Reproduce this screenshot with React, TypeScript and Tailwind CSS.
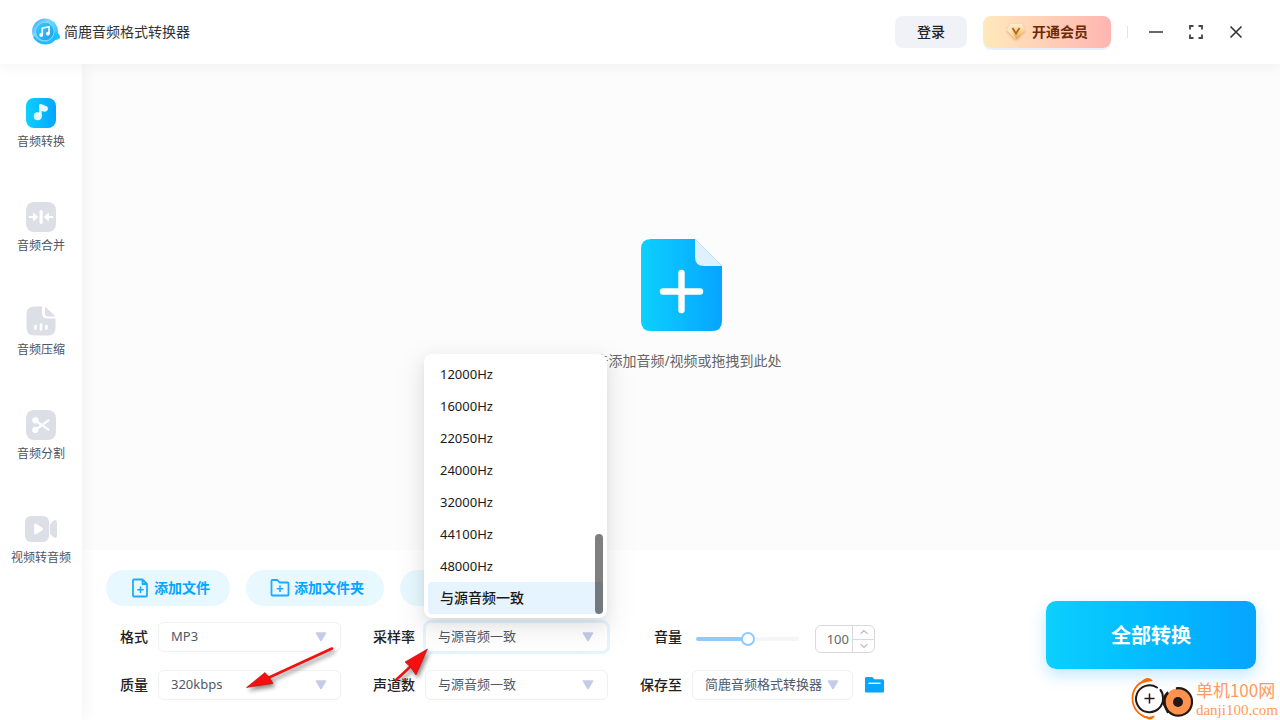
import React, { useState } from 'react';
import { ChevronDown, ChevronUp } from 'lucide-react';

interface NavItem {
  id: string;
  label: string;
  icon: React.ReactNode;
}

const navItems: NavItem[] = [
  {
    id: 'convert',
    label: '音频转换',
    icon: (
      <svg viewBox="0 0 32 32" className="w-8 h-8">
        <defs>
          <linearGradient id="nav-blue" x1="0" y1="0" x2="1" y2="0">
            <stop offset="0" stopColor="#0cd0ff" />
            <stop offset="1" stopColor="#06a5ff" />
          </linearGradient>
        </defs>
        <rect x="1" y="1" width="30" height="30" rx="8" fill="url(#nav-blue)" />
        <circle cx="12.7" cy="19.3" r="4" fill="#e8f8ff" />
        <path d="M14 19.5V8.6c0-1.2 1.1-2 2.2-1.5l5.200 2.100c1 .4 1.600 1.200 1.600 2.300 0 2.200-1.700 3.500-3.800 3.200l-2.500-.7v5.500z" fill="#e8f8ff" />
      </svg>
    ),
  },
  {
    id: 'merge',
    label: '音频合并',
    icon: (
      <svg viewBox="0 0 32 32" className="w-8 h-8">
        <rect x="1" y="1" width="30" height="30" rx="8" fill="#dcdfe6" />
        <rect x="14.500" y="9" width="3.200" height="14" rx="1.500" fill="#fff" />
        <path d="M4.500 16h6M27.500 16h-6" stroke="#fff" strokeWidth="2" strokeLinecap="round" />
        <path d="M8.500 12.200l4.300 3.800-4.300 3.800zM23.500 12.200l-4.300 3.800 4.300 3.800z" fill="#fff" stroke="#fff" strokeWidth=".8" strokeLinejoin="round" />
      </svg>
    ),
  },
  {
    id: 'compress',
    label: '音频压缩',
    icon: (
      <svg viewBox="0 0 32 32" className="w-8 h-8">
        <path d="M9.500 1.500h7.500v6.500q0 5.500 5.500 5.500h8V23q0 7.500-7.500 7.500H9.500q-8 0-8-8V9.500q0-8 8-8z" fill="#dcdfe6" />
        <path d="M20 2.200q.9 0 1.500.7l7.600 7q1 .9.800 1.600h-6.400q-3.500 0-3.500-3.500z" fill="#dcdfe6" />
        <path d="M10.500 21v2.500M16 19.500v5M21.500 21v2.500" stroke="#fff" strokeWidth="2.600" strokeLinecap="round" />
      </svg>
    ),
  },
  {
    id: 'split',
    label: '音频分割',
    icon: (
      <svg viewBox="0 0 32 32" className="w-8 h-8">
        <rect x="1" y="1" width="30" height="30" rx="8" fill="#dcdfe6" />
        <circle cx="10.300" cy="11.300" r="3.100" fill="#fff" />
        <circle cx="10.300" cy="20.900" r="3.100" fill="#fff" />
        <path d="M11 12l12.500 8.600M11 20.500L23.500 11.300" stroke="#fff" strokeWidth="2.200" strokeLinecap="round" />
      </svg>
    ),
  },
  {
    id: 'video',
    label: '视频转音频',
    icon: (
      <svg viewBox="0 0 32 32" className="w-8 h-8">
        <rect x="0" y="3" width="24" height="26" rx="6" fill="#dcdfe6" />
        <path d="M24.800 11.500L28 8q4-2.500 4 2v12q0 4.500-4 2l-3.200-3.500z" fill="#dcdfe6" />
        <path d="M9.500 12.200v7.600q0 1.800 1.600 1l6-3.800q1.300-1 0-2l-6-3.800q-1.600-.8-1.600 1z" fill="#fff" stroke="#fff" strokeWidth=".8" />
      </svg>
    ),
  },
];

const sampleRates = [
  '12000Hz',
  '16000Hz',
  '22050Hz',
  '24000Hz',
  '32000Hz',
  '44100Hz',
  '48000Hz',
  '与源音频一致',
];

const Logo = () => (
  <svg viewBox="0 0 28 28" className="w-7 h-7">
    <defs>
      <linearGradient id="logo-ring" x1="0" y1="0" x2="1" y2="1">
        <stop offset="0" stopColor="#3a9bff" />
        <stop offset=".35" stopColor="#7fd4ff" />
        <stop offset="1" stopColor="#05c8f8" />
      </linearGradient>
      <linearGradient id="logo-core" x1="0" y1="0" x2="1" y2="1">
        <stop offset="0" stopColor="#2fd3fb" />
        <stop offset="1" stopColor="#2497fa" />
      </linearGradient>
    </defs>
    <circle cx="13" cy="13.500" r="13" fill="url(#logo-ring)" />
    <path d="M19 22l4-8 1.500.5q3.500 1 3.500 5-1 2.500-6 2.500z" fill="#12c9f7" />
    <path d="M2 19q5 7 13 6t9-8" fill="none" stroke="#28b4ff" strokeWidth="2" />
    <circle cx="12.800" cy="13.500" r="9.300" fill="url(#logo-core)" stroke="#8fe3ff" strokeWidth=".8" />
    <path d="M10.300 17V10.200l6.700-1.400v6.800" fill="none" stroke="#fff" strokeWidth="1.600" />
    <circle cx="9.200" cy="17" r="1.900" fill="#fff" />
    <circle cx="15.900" cy="15.700" r="1.900" fill="#fff" />
  </svg>
);

const VipIcon = () => (
  <svg viewBox="0 0 20 20" className="w-5 h-5 drop-shadow-[0_1px_1px_rgba(190,110,30,0.45)]">
    <defs>
      <linearGradient id="vip-gold" x1="0" y1="0" x2="0" y2="1">
        <stop offset="0" stopColor="#fff0d2" />
        <stop offset=".5" stopColor="#fbcf8c" />
        <stop offset="1" stopColor="#f3a040" />
      </linearGradient>
    </defs>
    <path d="M5.500 2h9q1.200 0 2 1L18.700 6.500q.8 1.500-.3 2.700l-6.900 7.200q-1.500 1.400-3 0L1.600 9.200Q.5 8 1.300 6.500L3.500 3q.8-1 2-1z" fill="url(#vip-gold)" />
    <path d="M1.200 7.500L4 5l6 12q-.8 0-1.500-.6L1.600 9.200Q.9 8.500 1.200 7.500z" fill="#fff3dc" opacity=".55" />
    <path d="M6.500 6l3.500 5.500L13.500 6" fill="none" stroke="#b06a28" strokeWidth="1.900" />
  </svg>
);

const Triangle = () => (
  <svg viewBox="0 0 12 10" className="w-3 h-2.5 absolute right-[14px] top-[10px] pointer-events-none">
    <path d="M1.500 1h9L6 8.500z" fill="#c8cbe8" stroke="#c8cbe8" strokeWidth="1.600" strokeLinejoin="round" />
  </svg>
);

interface FieldProps {
  id: string;
  label: string;
  children: React.ReactNode;
}

const Field: React.FC<FieldProps> = ({ id, label, children }) => (
  <div className="flex items-center gap-[10px] h-[30px]">
    <label htmlFor={id} className="w-[42px] text-right text-sm font-medium text-[#222] whitespace-nowrap">
      {label}
    </label>
    {children}
  </div>
);

interface SelectProps {
  id: string;
  value: string;
  open?: boolean;
  narrow?: boolean;
}

const Select: React.FC<SelectProps> = ({ id, value, open, narrow }) => (
  <div className={`relative ${narrow ? 'w-[161px]' : 'w-[183px]'}`}>
    <select
      id={id}
      defaultValue={value}
      className={`appearance-none block w-full h-[30px] pl-3 pr-7 rounded-md border bg-transparent text-[13px] text-[#4e5969] outline-none ${
        open ? 'border-[#e6f4ff] ring-2 ring-[#e6f4ff]' : 'border-[#f0f0f5]'
      }`}
    >
      <option>{value}</option>
    </select>
    <Triangle />
    {open && (
      <div className="absolute z-30 bottom-full mb-1 -left-px w-[183px] p-1 bg-white rounded-lg shadow-[0_6px_16px_rgba(0,0,0,0.08),0_3px_6px_-4px_rgba(0,0,0,0.12),0_9px_28px_8px_rgba(0,0,0,0.05)]">
        <ul role="listbox">
          {sampleRates.map(rate => (
            <li
              key={rate}
              role="option"
              aria-selected={rate === value}
              className={`h-8 px-3 leading-8 rounded text-[#1a1a1a] ${
                rate === value ? 'bg-[#e6f4ff] text-sm font-medium' : 'text-[13px]'
              }`}
            >
              {rate}
            </li>
          ))}
        </ul>
        <div className="absolute right-1 bottom-1 w-2 h-20 rounded-full bg-black/50" />
      </div>
    )}
  </div>
);

const Watermark = () => (
  <div className="absolute right-[2px] bottom-0 z-40 flex items-end text-[#ff9a5c] pointer-events-none">
    <svg viewBox="0 0 66 44" className="w-[66px] h-11">
      <path d="M19 4.500C9 4.500 2.500 13 2.500 22.500S9 40 18 41.500" fill="none" stroke="#ff6a00" strokeWidth="1.800" />
      <path d="M10 7q4-5 8-5 3 0 5 3-5 0-8 1.500zM10 38q5 3 9 3l6-1.500q-2 4.500-6 4-2-1.500-4-1.500-3-1-5-4z" fill="#ff6a00" />
      <circle cx="19.500" cy="22.500" r="13" fill="#fff" />
      <path d="M27 11.500A13.500 13.500 0 1 0 33 22q0-5-2.500-8" fill="none" stroke="#231815" strokeWidth="2" strokeLinecap="round" />
      <path d="M19.500 17.500v10M14.500 22.500h10" stroke="#231815" strokeWidth="1.500" />
      <circle cx="48" cy="26" r="13.500" fill="#ff924d" />
      <path d="M46 12.400a13.700 13.700 0 1 1-8 4.500" fill="none" stroke="#231815" strokeWidth="2.200" />
      <path d="M38 16q-6 5-4 13l4 8" fill="none" stroke="#231815" strokeWidth="1.800" />
      <circle cx="48" cy="26" r="5" fill="#231815" />
    </svg>
    <div className="whitespace-nowrap">
      <div className="text-[17px] leading-5 font-['Noto_Sans_CJK_SC',sans-serif]">单机100网</div>
      <div className="text-[15px] leading-5 font-['Liberation_Serif',serif]">danji100.com</div>
    </div>
  </div>
);

export default function App() {
  const [active, setActive] = useState('convert');
  const [volume, setVolume] = useState(100);

  return (
    <div className="relative min-h-screen flex flex-col bg-white overflow-hidden font-['Noto_Sans','Noto_Sans_CJK_SC',sans-serif]">
      <header className="relative z-20 h-16 pl-8 pr-6 flex items-center bg-white shadow-[0_2px_16px_rgba(0,0,0,0.05)]">
        <Logo />
        <h1 className="ml-1 text-sm text-[#333]">简鹿音频格式转换器</h1>
        <button className="ml-auto w-[72px] h-8 rounded-lg bg-[#f1f2f8] text-sm font-medium text-[#222]">登录</button>
        <button className="ml-4 w-32 h-8 rounded-lg flex items-center justify-center gap-1.5 bg-linear-to-r from-[#ffe9bb] to-[#ffb5b2] shadow-[0_2px_0_#e6f2ff] text-sm font-bold text-[#6b2a05]">
          <VipIcon />
          开通会员
        </button>
        <div className="ml-4 mr-2 w-px h-3 bg-[#e3e3e6]" />
        <button aria-label="最小化" className="w-10 h-10 flex items-center justify-center">
          <svg viewBox="0 0 16 16" className="w-4 h-4"><path d="M1 8h14" stroke="#444" strokeWidth="1.600" /></svg>
        </button>
        <button aria-label="最大化" className="w-10 h-10 flex items-center justify-center">
          <svg viewBox="0 0 16 16" className="w-4 h-4">
            <path d="M2 5.500V2h3.500M10.500 2H14v3.500M14 10.500V14h-3.500M5.500 14H2v-3.500" fill="none" stroke="#444" strokeWidth="1.800" />
          </svg>
        </button>
        <button aria-label="关闭" className="w-10 h-10 flex items-center justify-center">
          <svg viewBox="0 0 16 16" className="w-4 h-4"><path d="M2.500 2.500l11 11M13.500 2.500l-11 11" stroke="#333" strokeWidth="1.600" /></svg>
        </button>
      </header>

      <div className="flex-1 flex">
        <aside className="relative z-10 w-[82px] shrink-0 pt-[33px] bg-white shadow-[2px_0_16px_rgba(0,0,0,0.05)]">
          <nav className="flex flex-col gap-[51px]">
            {navItems.map(item => (
              <button
                key={item.id}
                onClick={() => setActive(item.id)}
                aria-current={active === item.id ? 'page' : undefined}
                className="flex flex-col items-center gap-[5px] text-xs leading-4 text-[#4e5566]"
              >
                {item.icon}
                {item.label}
              </button>
            ))}
          </nav>
        </aside>

        <main className="flex-1 min-w-0 flex flex-col">
          <section className="flex-1 flex flex-col items-center justify-center gap-5 pb-1 bg-[#fcfcfc]">
            <svg viewBox="0 0 81 92" className="w-[81px] h-[92px]">
              <defs>
                <linearGradient id="file-blue" x1="0" y1="0" x2="1" y2="0">
                  <stop offset="0" stopColor="#0cd0ff" />
                  <stop offset="1" stopColor="#06a5ff" />
                </linearGradient>
              </defs>
              <path d="M10 0h44l27 27v55q0 10-10 10H10Q0 92 0 82V10Q0 0 10 0z" fill="url(#file-blue)" />
              <path d="M54 0l27 27H63q-9 0-9-9z" fill="#dff1fc" />
              <path d="M40.500 34v37M22 52.500h37" stroke="#fff" strokeWidth="6.400" strokeLinecap="round" />
            </svg>
            <p className="text-sm leading-5 text-[#666]">点击添加音频/视频或拖拽到此处</p>
          </section>

          <section className="relative px-6 py-5 flex items-center justify-between gap-6 bg-white">
            <div className="flex flex-col gap-4">
              <div className="flex gap-4 text-sm font-bold text-[#06a5ff]">
                <button className="h-9 pl-6 pr-5 rounded-full bg-[#e8f8ff] flex items-center gap-1">
                  <svg viewBox="0 0 20 20" className="w-5 h-5">
                    <path d="M4 1.500h8.500l4.500 4.500v11.500q0 1-1 1H4q-1 0-1-1v-15q0-1 1-1zM12.500 1.500v4.500h4.500" fill="none" stroke="#1eaaff" strokeWidth="1.800" strokeLinejoin="round" />
                    <path d="M10.500 8.500v6.500M7.200 11.800h6.500" stroke="#1eaaff" strokeWidth="1.600" />
                  </svg>
                  添加文件
                </button>
                <button className="h-9 pl-6 pr-5 rounded-full bg-[#e8f8ff] flex items-center gap-1">
                  <svg viewBox="0 0 20 20" className="w-5 h-5">
                    <path d="M2.500 2h5l2 2.500h8q1 0 1 1V16.500q0 1-1 1h-15q-1 0-1-1V3q0-1 1-1z" fill="none" stroke="#1eaaff" strokeWidth="1.800" strokeLinejoin="round" />
                    <path d="M10 7.500v6.500M6.800 10.800h6.500" stroke="#1eaaff" strokeWidth="1.600" />
                  </svg>
                  添加文件夹
                </button>
                <button aria-label="清空列表" className="h-9 w-[124px] rounded-full bg-[#e8f8ff]" />
              </div>

              <div className="flex gap-8">
                <div className="flex flex-col gap-[18px]">
                  <Field id="format" label="格式"><Select id="format" value="MP3" /></Field>
                  <Field id="quality" label="质量"><Select id="quality" value="320kbps" /></Field>
                </div>
                <div className="flex flex-col gap-[18px]">
                  <Field id="rate" label="采样率"><Select id="rate" value="与源音频一致" open /></Field>
                  <Field id="channels" label="声道数"><Select id="channels" value="与源音频一致" /></Field>
                </div>
                <div className="flex flex-col gap-[18px]">
                  <Field id="volume" label="音量">
                    <div className="flex items-center gap-4 pl-1 pt-1">
                      <input
                        id="volume"
                        type="range"
                        min={0}
                        max={200}
                        value={volume}
                        onChange={e => setVolume(Number(e.target.value))}
                        className="appearance-none w-[103px] h-1 rounded-full bg-[linear-gradient(to_right,#91caff_50%,#f5f5f5_50%)] [&::-webkit-slider-thumb]:appearance-none [&::-webkit-slider-thumb]:w-[14px] [&::-webkit-slider-thumb]:h-[14px] [&::-webkit-slider-thumb]:rounded-full [&::-webkit-slider-thumb]:bg-white [&::-webkit-slider-thumb]:border-2 [&::-webkit-slider-thumb]:border-[#91caff]"
                      />
                      <div className="flex w-[60px] h-7 rounded-md border border-[#d9d9d9] overflow-hidden">
                        <input
                          aria-label="音量值"
                          inputMode="numeric"
                          value={volume}
                          onChange={e => setVolume(Number(e.target.value) || 0)}
                          className="w-9 pt-0.5 pr-[3px] text-right text-[13px] text-[#666] outline-none"
                        />
                        <div className="flex-1 flex flex-col border-l border-[#d9d9d9] text-[#888]">
                          <button aria-label="增加" onClick={() => setVolume(volume + 1)} className="flex-1 flex items-center justify-center border-b border-[#d9d9d9]">
                            <ChevronUp size={12} />
                          </button>
                          <button aria-label="减少" onClick={() => setVolume(volume - 1)} className="flex-1 flex items-center justify-center">
                            <ChevronDown size={12} />
                          </button>
                        </div>
                      </div>
                    </div>
                  </Field>
                  <Field id="save" label="保存至">
                    <Select id="save" value="简鹿音频格式转换器" narrow />
                    <button aria-label="打开文件夹" className="ml-0.5">
                      <svg viewBox="0 0 19 16" className="w-[19px] h-4">
                        <path d="M1.500 0h5.800l2 2.300h8.200q1.500 0 1.500 1.500v10.700q0 1-1 1H1q-1 0-1-1v-13Q0 0 1.500 0z" fill="#06a5ff" />
                        <path d="M3.500 6.300h12" stroke="#fff" strokeWidth="1.400" />
                      </svg>
                    </button>
                  </Field>
                </div>
              </div>
            </div>

            <button className="w-[210px] h-[68px] pt-0.5 shrink-0 rounded-[10px] bg-linear-to-r from-[#0cd0ff] to-[#06a5ff] shadow-[0_6px_16px_rgba(6,165,255,0.25)] text-xl font-bold text-white">
              全部转换
            </button>

            <svg viewBox="82 550 400 170" className="absolute left-0 top-0 z-30 w-[400px] h-[170px] pointer-events-none drop-shadow-[2px_3px_2px_rgba(0,0,0,0.45)]">
              <path d="M332 648.500L268 678" stroke="#f31010" strokeWidth="2.600" strokeLinecap="round" />
              <path d="M246.500 687.500L265 672.500l4.500 5 3.500 6z" fill="#f31010" stroke="#c20a0a" strokeWidth=".6" />
              <path d="M396 680l14-13" stroke="#f31010" strokeWidth="2.600" strokeLinecap="round" />
              <path d="M427.500 649L405 662l5.500 5 5.500 8z" fill="#f31010" stroke="#c20a0a" strokeWidth=".6" />
            </svg>
          </section>
        </main>
      </div>

      <Watermark />
    </div>
  );
}
